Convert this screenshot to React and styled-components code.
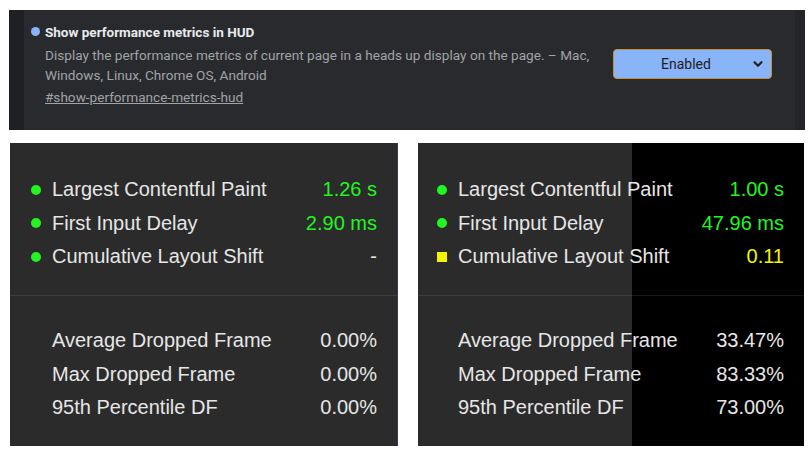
import React from 'react';
import styled, { createGlobalStyle } from 'styled-components';

const GlobalStyle = createGlobalStyle`
  html, body {
    margin: 0;
    padding: 0;
    background: #ffffff;
  }
`;

const Page = styled.div`
  width: 812px;
  height: 449px;
  padding: 10px 0 0 9px;
  box-sizing: border-box;
  display: flex;
  flex-direction: column;
  gap: 13px;
  overflow: hidden;
`;

const FlagPanel = styled.div`
  width: 796px;
  height: 120px;
  display: flex;
  background: #292a2d;
  font-family: Roboto, "Liberation Sans", sans-serif;
`;

const SideStrip = styled.div`
  width: ${p => p.$w}px;
  background: ${p => p.$bg};
  flex-shrink: 0;
`;

const FlagBody = styled.div`
  flex: 1;
  display: flex;
  align-items: flex-start;
  padding: 12px 0 0 7px;
`;

const FlagBullet = styled.span`
  width: 9px;
  height: 9px;
  border-radius: 50%;
  background: #8ab4f8;
  margin-top: 5px;
  flex-shrink: 0;
`;

const FlagText = styled.div`
  width: 556px;
  margin-left: 5px;
`;

const FlagTitle = styled.div`
  color: #e8eaed;
  font-size: 13.5px;
  font-weight: 700;
  line-height: 20px;
  margin-bottom: 3px;
`;

const FlagDesc = styled.div`
  color: #a0a3a8;
  font-size: 13.6px;
  line-height: 20px;
`;

const FlagLink = styled.a`
  display: inline-block;
  color: #a0a3a8;
  font-size: 13.6px;
  line-height: 20px;
  margin-top: 2px;
  text-decoration: underline;
`;

const SelectBox = styled.div`
  margin: 27px 0 0 12px;
  width: 159px;
  height: 30px;
  box-sizing: border-box;
  border: 1.5px solid #c8903a;
  border-radius: 4px;
  background: #8ab4f8;
  display: flex;
  align-items: center;
  color: #202124;
  font-size: 14px;
`;

const SelectLabel = styled.span`
  flex: 1;
  text-align: center;
  padding-left: 6px;
`;

const Chevron = styled.svg`
  width: 12px;
  height: 12px;
  margin-right: 7px;
`;

const HudRow = styled.div`
  display: flex;
  gap: 20px;
  padding-left: 1px;
`;

const Hud = styled.div`
  width: ${p => p.$w}px;
  height: 303px;
  display: flex;
  flex-direction: column;
  background: ${p => (p.$split ? `linear-gradient(to right, #2b2b2b ${p.$split}px, #000 ${p.$split}px)` : '#2b2b2b')};
  border-right: ${p => (p.$split ? 'none' : '1px solid #3b3b52')};
  box-sizing: border-box;
  font-family: "Liberation Sans", Arial, sans-serif;
  font-size: 20px;
  color: #e6e6e6;
`;

const HudSection = styled.div`
  height: ${p => p.$h}px;
  padding: ${p => p.$top}px 20px 0 ${p => p.$left}px;
  box-sizing: border-box;
  border-bottom: ${p => (p.$divider ? '1px solid rgba(255,255,255,0.09)' : 'none')};
`;

const MetricRow = styled.div`
  display: flex;
  align-items: center;
  height: 33.5px;
`;

const Marker = styled.span`
  width: 10px;
  height: 10px;
  border-radius: ${p => (p.$square ? '0' : '50%')};
  background: ${p => p.$color};
  margin-right: 11px;
  flex-shrink: 0;
`;

const Spacer = styled.span`
  width: 21px;
  flex-shrink: 0;
`;

const Label = styled.span`
  flex: 1;
  white-space: nowrap;
`;

const Value = styled.span`
  color: ${p => p.$color || '#e6e6e6'};
  white-space: nowrap;
`;

const GREEN = '#22f522';
const YELLOW = '#f4f400';

const panels = [
  {
    width: 388,
    left: 21,
    vitals: [
      { label: 'Largest Contentful Paint', value: '1.26 s', color: GREEN },
      { label: 'First Input Delay', value: '2.90 ms', color: GREEN },
      { label: 'Cumulative Layout Shift', value: '-', color: GREEN, valueColor: '#e6e6e6' },
    ],
    frames: ['0.00%', '0.00%', '0.00%'],
  },
  {
    width: 386,
    left: 19,
    split: 214,
    vitals: [
      { label: 'Largest Contentful Paint', value: '1.00 s', color: GREEN },
      { label: 'First Input Delay', value: '47.96 ms', color: GREEN },
      { label: 'Cumulative Layout Shift', value: '0.11', color: YELLOW, square: true },
    ],
    frames: ['33.47%', '83.33%', '73.00%'],
  },
];

const frameLabels = ['Average Dropped Frame', 'Max Dropped Frame', '95th Percentile DF'];

export default function App() {
  return (
    <Page>
      <GlobalStyle />
      <FlagPanel>
        <SideStrip $w={15} $bg="#1f2023" />
        <FlagBody>
          <FlagBullet />
          <FlagText>
            <FlagTitle>Show performance metrics in HUD</FlagTitle>
            <FlagDesc>
              Display the performance metrics of current page in a heads up display on the page. – Mac, Windows, Linux, Chrome OS, Android
            </FlagDesc>
            <FlagLink>#show-performance-metrics-hud</FlagLink>
          </FlagText>
          <SelectBox>
            <SelectLabel>Enabled</SelectLabel>
            <Chevron viewBox="0 0 12 12">
              <path d="M2.5 4.2 L6 7.8 L9.5 4.2" fill="none" stroke="#202124" strokeWidth="2.2" strokeLinecap="round" strokeLinejoin="round" />
            </Chevron>
          </SelectBox>
        </FlagBody>
        <SideStrip $w={10} $bg="#242528" />
      </FlagPanel>

      <HudRow>
        {panels.map((panel, i) => (
          <Hud key={i} $w={panel.width} $split={panel.split}>
            <HudSection $h={153} $top={30} $left={panel.left} $divider>
              {panel.vitals.map(m => (
                <MetricRow key={m.label}>
                  <Marker $color={m.color} $square={m.square} />
                  <Label>{m.label}</Label>
                  <Value $color={m.valueColor || m.color}>{m.value}</Value>
                </MetricRow>
              ))}
            </HudSection>
            <HudSection $h={150} $top={28} $left={panel.left}>
              {frameLabels.map((label, idx) => (
                <MetricRow key={label}>
                  <Spacer />
                  <Label>{label}</Label>
                  <Value>{panel.frames[idx]}</Value>
                </MetricRow>
              ))}
            </HudSection>
          </Hud>
        ))}
      </HudRow>
    </Page>
  );
}
